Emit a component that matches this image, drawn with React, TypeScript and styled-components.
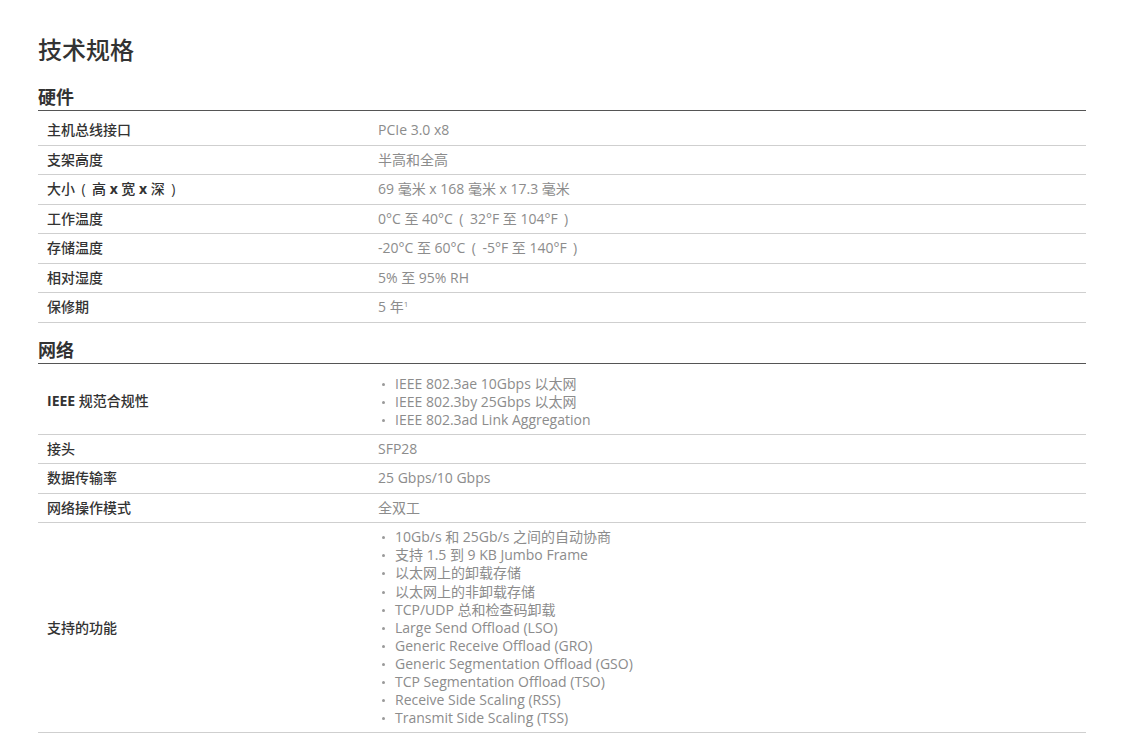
import React from "react";
import styled, { createGlobalStyle } from "styled-components";

const Global = createGlobalStyle`
  html, body { margin: 0; padding: 0; background: #fff; }
  body { font-family: "Open Sans", "Noto Sans CJK SC", sans-serif; color: #333; }
`;

const Page = styled.div`
  width: 1048px;
  padding: 35px 38px 20px;
`;

const Title = styled.h1`
  margin: 0;
  font-size: 24px;
  line-height: 30px;
  font-weight: 500;
  color: #333;
`;

const Section = styled.section<{ $first?: boolean }>`
  margin-top: ${(p) => (p.$first ? "20px" : "15px")};
`;

const SectionHead = styled.h2`
  margin: 0;
  font-size: 18px;
  line-height: 24px;
  font-weight: 600;
  color: #333;
  padding-bottom: 1px;
  border-bottom: 1px solid #555;
`;

const Table = styled.div<{ $gap: number }>`
  margin-top: ${(p) => p.$gap}px;
`;

const Row = styled.div`
  display: grid;
  grid-template-columns: 340px 1fr;
  border-bottom: 1px solid #cfcfcf;
  font-size: 14px;
  line-height: 18.5px;
`;

const Label = styled.div`
  padding: 5px 9px;
  display: flex;
  align-items: center;
  font-weight: 500;
  color: #333;
`;

const Strong = styled.span`
  font-weight: 700;
`;

const Value = styled.div`
  padding: 5px 0;
  color: #8c8c8c;
`;

const Paren = styled.span`
  display: inline-block;
  width: 17px;
  text-align: center;
`;

const List = styled.ul`
  margin: 0;
  padding: 0;
  list-style: none;
`;

const Item = styled.li`
  position: relative;
  padding-left: 17px;
  line-height: 18.1px;
  &::before {
    content: "";
    position: absolute;
    left: 4px;
    top: 8px;
    width: 3px;
    height: 3px;
    border-radius: 50%;
    background: #9a9a9a;
  }
`;

const Sup = styled.sup`
  font-size: 8px;
  line-height: 0;
  vertical-align: 5px;
`;

type Spec = { label: React.ReactNode; key: string; value?: React.ReactNode; list?: string[] };

const hardware: Spec[] = [
  { key: "bus", label: "主机总线接口", value: "PCIe 3.0 x8" },
  { key: "bracket", label: "支架高度", value: "半高和全高" },
  {
    key: "size",
    label: (
      <>
        大小<Paren>(</Paren>高 <Strong>x</Strong> 宽 <Strong>x</Strong> 深<Paren>)</Paren>
      </>
    ),
    value: "69 毫米 x 168 毫米 x 17.3 毫米",
  },
  {
    key: "optemp",
    label: "工作温度",
    value: <>0°C 至 40°C<Paren>(</Paren>32°F 至 104°F<Paren>)</Paren></>,
  },
  {
    key: "sttemp",
    label: "存储温度",
    value: <>-20°C 至 60°C<Paren>(</Paren>-5°F 至 140°F<Paren>)</Paren></>,
  },
  { key: "hum", label: "相对湿度", value: "5% 至 95% RH" },
  { key: "warranty", label: "保修期", value: <>5 年<Sup>1</Sup></> },
];

const network: Spec[] = [
  {
    key: "ieee",
    label: <><Strong>IEEE</Strong> 规范合规性</>,
    list: [
      "IEEE 802.3ae 10Gbps 以太网",
      "IEEE 802.3by 25Gbps 以太网",
      "IEEE 802.3ad Link Aggregation",
    ],
  },
  { key: "conn", label: "接头", value: "SFP28" },
  { key: "rate", label: "数据传输率", value: "25 Gbps/10 Gbps" },
  { key: "mode", label: "网络操作模式", value: "全双工" },
  {
    key: "feat",
    label: "支持的功能",
    list: [
      "10Gb/s 和 25Gb/s 之间的自动协商",
      "支持 1.5 到 9 KB Jumbo Frame",
      "以太网上的卸载存储",
      "以太网上的非卸载存储",
      "TCP/UDP 总和检查码卸载",
      "Large Send Offload (LSO)",
      "Generic Receive Offload (GRO)",
      "Generic Segmentation Offload (GSO)",
      "TCP Segmentation Offload (TSO)",
      "Receive Side Scaling (RSS)",
      "Transmit Side Scaling (TSS)",
    ],
  },
];

const SpecTable = ({ rows, gap }: { rows: Spec[]; gap: number }) => (
  <Table $gap={gap}>
    {rows.map((r) => (
      <Row key={r.key}>
        <Label>
          <span>{r.label}</span>
        </Label>
        <Value>
          {r.list ? (
            <List>
              {r.list.map((i) => (
                <Item key={i}>{i}</Item>
              ))}
            </List>
          ) : (
            r.value
          )}
        </Value>
      </Row>
    ))}
  </Table>
);

export default function App() {
  return (
    <>
      <Global />
      <Page>
        <Title>技术规格</Title>
        <Section $first>
          <SectionHead>硬件</SectionHead>
          <SpecTable rows={hardware} gap={5} />
        </Section>
        <Section>
          <SectionHead>网络</SectionHead>
          <SpecTable rows={network} gap={6} />
        </Section>
      </Page>
    </>
  );
}
